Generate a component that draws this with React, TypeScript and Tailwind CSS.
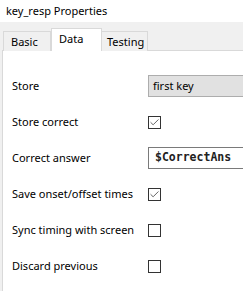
import { Check } from "lucide-react";

function Box({ checked }: { checked: boolean }) {
  return (
    <div className="flex h-[13px] w-[13px] items-center justify-center border border-[#333333] bg-white">
      {checked && <Check className="h-[11px] w-[11px] text-[#444444]" strokeWidth={1.8} />}
    </div>
  );
}

function Row({ label, children }: { label: string; children: React.ReactNode }) {
  return (
    <div className="flex h-9 items-center">
      <div className="w-[136px] shrink-0 whitespace-nowrap">{label}</div>
      {children}
    </div>
  );
}

export default function App() {
  return (
    <div
      className="h-[291px] w-[243px] overflow-hidden bg-[#f0f0f0] text-[11px] text-black"
      style={{ fontFamily: '"Noto Sans", "Liberation Sans", sans-serif' }}
    >
      <div className="h-[22px] bg-white pl-[6px] leading-[22px]">key_resp Properties</div>
      <div className="flex h-[28px] items-end pl-[3px]">
        <div className="mb-[-1px] flex h-[20px] w-[48px] items-center border border-b-0 border-[#d9d9d9] bg-[#f0f0f0] pl-[7px] pt-[2px]">
          Basic
        </div>
        <div className="relative z-10 mb-[-1px] flex h-[23px] w-[51px] items-start border border-b-0 border-[#d9d9d9] bg-white pl-[7px] pt-[2px]">
          Data
        </div>
        <div className="mb-[-1px] flex h-[20px] w-[46px] items-center border border-b-0 border-l-0 border-[#d9d9d9] bg-[#f0f0f0] pl-[5px] pt-[2px]">
          Testing
        </div>
      </div>
      <div className="ml-[2px] h-[241px] border-l border-t border-[#d9d9d9] bg-white pl-[9px] pt-[17px]">
        <Row label="Store">
          <div className="flex h-[22px] flex-1 items-center border border-r-0 border-[#adadad] bg-[#e1e1e1] pl-[4px]">
            first key
          </div>
        </Row>
        <Row label="Store correct">
          <Box checked />
        </Row>
        <Row label="Correct answer">
          <div
            className="flex h-[22px] flex-1 items-center border border-r-0 border-[#7a7a7a] bg-white pl-[6px] text-[11.5px] font-bold text-[#222222]"
            style={{ fontFamily: '"DejaVu Sans Mono", "Liberation Mono", monospace' }}
          >
            $CorrectAns
          </div>
        </Row>
        <Row label="Save onset/offset times">
          <Box checked />
        </Row>
        <Row label="Sync timing with screen">
          <Box checked={false} />
        </Row>
        <Row label="Discard previous">
          <Box checked={false} />
        </Row>
      </div>
    </div>
  );
}
